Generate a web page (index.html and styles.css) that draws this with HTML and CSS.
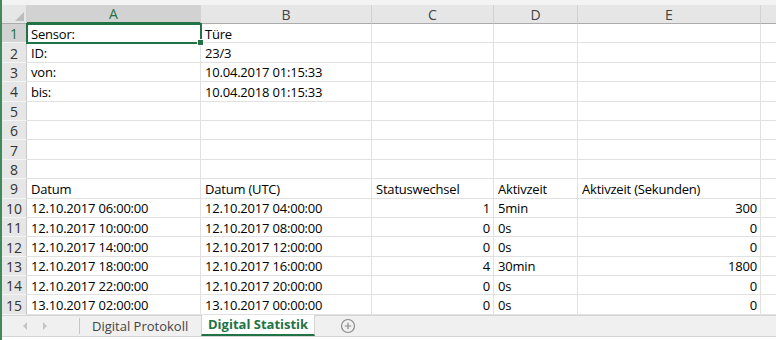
FILE: index.html
```html
<!DOCTYPE html>
<html lang="de">
<head>
  <meta charset="UTF-8" />
  <title>Digital Statistik</title>
  <link rel="stylesheet" href="styles.css">
</head>
<body>
  <div class="app">
    <div class="topstrip"></div>
    <div class="sheet">
      <div class="hd corner"></div><div class="hd col cur">A</div><div class="hd col">B</div><div class="hd col">C</div><div class="hd col">D</div><div class="hd col">E</div><div class="hd col last"></div>

      <div class="rh cur">1</div><div class="c sel">Sensor:</div><div class="c">Türe</div><div class="c"></div><div class="c"></div><div class="c"></div><div class="c last"></div>
      <div class="rh">2</div><div class="c">ID:</div><div class="c">23/3</div><div class="c"></div><div class="c"></div><div class="c"></div><div class="c last"></div>
      <div class="rh">3</div><div class="c">von:</div><div class="c">10.04.2017 01:15:33</div><div class="c"></div><div class="c"></div><div class="c"></div><div class="c last"></div>
      <div class="rh">4</div><div class="c">bis:</div><div class="c">10.04.2018 01:15:33</div><div class="c"></div><div class="c"></div><div class="c"></div><div class="c last"></div>
      <div class="rh">5</div><div class="c"></div><div class="c"></div><div class="c"></div><div class="c"></div><div class="c"></div><div class="c last"></div>
      <div class="rh">6</div><div class="c"></div><div class="c"></div><div class="c"></div><div class="c"></div><div class="c"></div><div class="c last"></div>
      <div class="rh">7</div><div class="c"></div><div class="c"></div><div class="c"></div><div class="c"></div><div class="c"></div><div class="c last"></div>
      <div class="rh">8</div><div class="c"></div><div class="c"></div><div class="c"></div><div class="c"></div><div class="c"></div><div class="c last"></div>
      <div class="rh">9</div><div class="c">Datum</div><div class="c">Datum (UTC)</div><div class="c">Statuswechsel</div><div class="c">Aktivzeit</div><div class="c">Aktivzeit (Sekunden)</div><div class="c last"></div>
      <div class="rh">10</div><div class="c">12.10.2017 06:00:00</div><div class="c">12.10.2017 04:00:00</div><div class="c num">1</div><div class="c">5min</div><div class="c num">300</div><div class="c last"></div>
      <div class="rh">11</div><div class="c">12.10.2017 10:00:00</div><div class="c">12.10.2017 08:00:00</div><div class="c num">0</div><div class="c">0s</div><div class="c num">0</div><div class="c last"></div>
      <div class="rh">12</div><div class="c">12.10.2017 14:00:00</div><div class="c">12.10.2017 12:00:00</div><div class="c num">0</div><div class="c">0s</div><div class="c num">0</div><div class="c last"></div>
      <div class="rh">13</div><div class="c">12.10.2017 18:00:00</div><div class="c">12.10.2017 16:00:00</div><div class="c num">4</div><div class="c">30min</div><div class="c num">1800</div><div class="c last"></div>
      <div class="rh">14</div><div class="c">12.10.2017 22:00:00</div><div class="c">12.10.2017 20:00:00</div><div class="c num">0</div><div class="c">0s</div><div class="c num">0</div><div class="c last"></div>
      <div class="rh">15</div><div class="c">13.10.2017 02:00:00</div><div class="c">13.10.2017 00:00:00</div><div class="c num">0</div><div class="c">0s</div><div class="c num">0</div><div class="c last"></div>
    </div>

    <div class="tabs">
      <div class="nav">
        <span class="arrow left"></span>
        <span class="arrow right"></span>
      </div>
      <div class="tab">Digital Protokoll</div>
      <div class="tab active">Digital Statistik</div>
      <div class="add">
        <svg width="16" height="16" viewBox="0 0 16 16">
          <circle cx="8" cy="8" r="6.5" fill="none" stroke="#8a8a8a" stroke-width="1.2"/>
          <path d="M8 4.8v6.4M4.8 8h6.4" stroke="#8a8a8a" stroke-width="1.2"/>
        </svg>
      </div>
    </div>
  </div>
</body>
</html>
```

FILE: styles.css
```css
html, body {
  margin: 0;
  padding: 0;
  background: #fff;
  overflow: hidden;
}
.app {
  width: 774px;
  height: 340px;
  border-left: 2px solid #3f8a5c;
  font-family: 'Open Sans', 'Liberation Sans', sans-serif;
  color: #222;
}
.topstrip {
  height: 5px;
  background: #f3f3f3;
}
.sheet {
  display: grid;
  grid-template-columns: 25px 174px 171px 122px 84px 183px 1fr;
  grid-template-rows: 19px repeat(15, 19.4px);
}
.sheet > div {
  box-sizing: border-box;
  overflow: hidden;
  white-space: nowrap;
}
.hd {
  background: #e6e6e6;
  border-bottom: 1px solid #ababab;
  border-right: 1px solid #d2d2d2;
  font-size: 14px;
  color: #444;
  display: flex;
  align-items: center;
  justify-content: center;
}
.hd.cur {
  background: #d2d2d2;
  color: #217346;
  border-bottom: 2px solid #217346;
}
.hd.last {
  border-right: none;
}
.corner {
  position: relative;
}
.corner::after {
  content: '';
  position: absolute;
  right: 2px;
  bottom: 2px;
  border-left: 9px solid transparent;
  border-bottom: 9px solid #bdbdbd;
}
.rh {
  background: #e6e6e6;
  border-right: 1px solid #c8c8c8;
  border-bottom: 1px solid #f4f4f4;
  font-size: 14px;
  color: #333;
  display: flex;
  align-items: center;
  justify-content: center;
  padding-top: 1px;
}
.rh.cur {
  background: #d2d2d2;
  color: #217346;
}
.c {
  border-right: 1px solid #e1e1e1;
  border-bottom: 1px solid #e1e1e1;
  font-size: 13px;
  letter-spacing: -0.2px;
  color: #000;
  display: flex;
  align-items: center;
  padding: 1px 3px 0 4px;
}
.c.num {
  justify-content: flex-end;
}
.c.last {
  border-right: none;
}
.c.sel {
  position: relative;
  overflow: visible;
  outline: 2px solid #217346;
  outline-offset: -1px;
  z-index: 1;
}
.c.sel::after {
  content: '';
  position: absolute;
  right: -4px;
  bottom: -4px;
  width: 5px;
  height: 5px;
  background: #217346;
  border: 1px solid #fff;
}
.tabs {
  display: flex;
  height: 20px;
  background: #f0f0f0;
  border-top: 1px solid #d4d4d4;
  border-bottom: 1px solid #d4d4d4;
  font-size: 13px;
  color: #444;
  white-space: nowrap;
}
.tabs > div {
  flex-shrink: 0;
}
.nav {
  width: 78px;
  display: flex;
  align-items: center;
  gap: 16px;
  padding-left: 21px;
  box-sizing: border-box;
  border-right: 1px solid #c6c6c6;
  margin: 2px 0;
}
.arrow {
  width: 0;
  height: 0;
  border-top: 4px solid transparent;
  border-bottom: 4px solid transparent;
}
.arrow.left {
  border-right: 4px solid #c4c4c4;
}
.arrow.right {
  border-left: 4px solid #c4c4c4;
}
.tab {
  padding: 0 12px;
  display: flex;
  align-items: center;
  width: 121px;
  box-sizing: border-box;
}
.tab.active {
  width: 114px;
  background: #fff;
  color: #217346;
  font-weight: bold;
  padding: 0 6px;
  border-left: 1px solid #d4d4d4;
  border-right: 1px solid #d4d4d4;
  border-bottom: 2px solid #217346;
  margin-top: -1px;
}
.add {
  display: flex;
  align-items: center;
  padding-left: 25px;
}
```
